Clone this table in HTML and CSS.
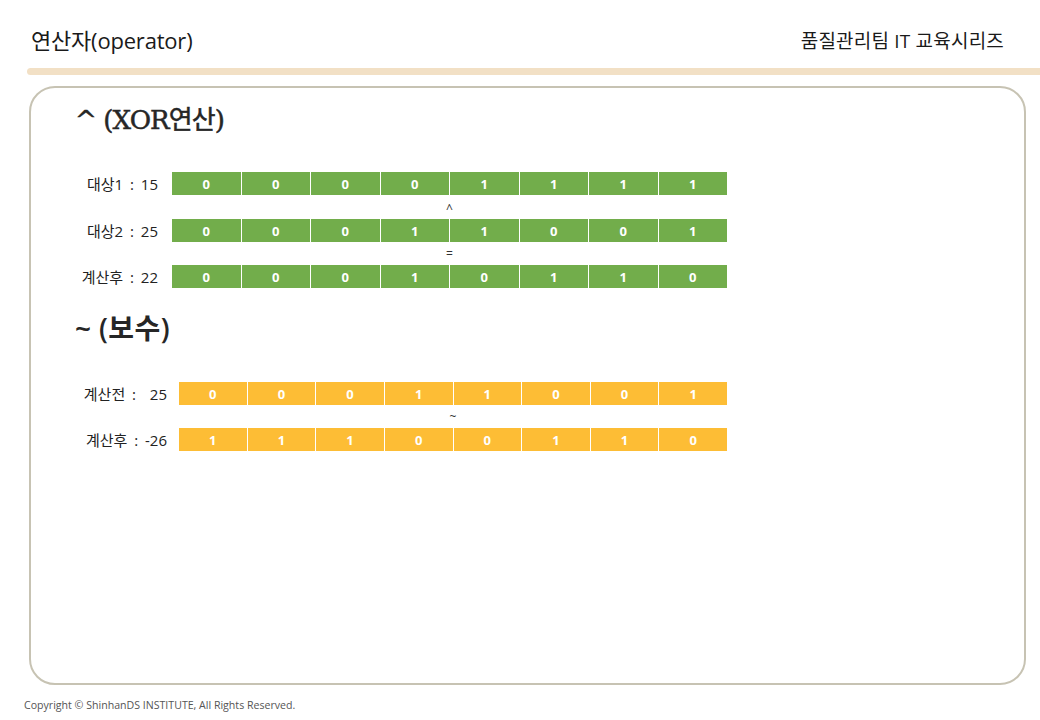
FILE: index.html
```html
<!DOCTYPE html>
<html lang="ko">
<head>
<meta charset="utf-8">
<title>연산자(operator)</title>
<link rel="stylesheet" href="styles.css">
</head>
<body>
<header class="top">
  <div class="title">연산자(operator)</div>
  <div class="series">품질관리팀 IT 교육시리즈</div>
</header>
<div class="rule"></div>
<main class="card">
  <h1 class="h-xor">^ (XOR연산)</h1>
  <section class="grid xor">
    <div class="label">대상1 : 15</div>
    <div class="bits green"><span>0</span><span>0</span><span>0</span><span>0</span><span>1</span><span>1</span><span>1</span><span>1</span></div>
    <div class="op op-a">^</div>
    <div class="label">대상2 : 25</div>
    <div class="bits green"><span>0</span><span>0</span><span>0</span><span>1</span><span>1</span><span>0</span><span>0</span><span>1</span></div>
    <div class="op op-b">=</div>
    <div class="label">계산후 : 22</div>
    <div class="bits green"><span>0</span><span>0</span><span>0</span><span>1</span><span>0</span><span>1</span><span>1</span><span>0</span></div>
  </section>
  <h2 class="h-not">~ (보수)</h2>
  <section class="grid not">
    <div class="label">계산전 :  25</div>
    <div class="bits gold"><span>0</span><span>0</span><span>0</span><span>1</span><span>1</span><span>0</span><span>0</span><span>1</span></div>
    <div class="op op-b">~</div>
    <div class="label">계산후 : -26</div>
    <div class="bits gold"><span>1</span><span>1</span><span>1</span><span>0</span><span>0</span><span>1</span><span>1</span><span>0</span></div>
  </section>
</main>
<footer class="foot">Copyright © ShinhanDS INSTITUTE, All Rights Reserved.</footer>
</body>
</html>
```

FILE: styles.css
```css
* { box-sizing: border-box; }
html, body { margin: 0; padding: 0; background: #ffffff; }
body {
  width: 1040px;
  height: 720px;
  overflow: hidden;
  font-family: "Open Sans", "Noto Sans CJK KR", sans-serif;
  color: #222;
}
.top {
  display: flex;
  justify-content: space-between;
  align-items: center;
  padding: 28px 36px 0 31px;
  height: 52px;
}
.title {
  font-size: 22px;
  line-height: 24px;
  color: #1a1a1a;
  letter-spacing: -0.2px;
}
.series {
  font-size: 19px;
  line-height: 24px;
  color: #1a1a1a;
  letter-spacing: 0.2px;
  padding-top: 2px;
}
.rule {
  margin: 16px 0 0 27px;
  height: 7px;
  background: #f2e0c5;
  border-radius: 4px 0 0 4px;
}
.card {
  margin: 11px 14px 0 29px;
  height: 599px;
  border: 2px solid #c7c3b3;
  border-radius: 26px;
  padding: 16px 0 0 0;
}
.h-xor {
  margin: 0 0 0 44px;
  font-family: "DejaVu Serif", "Noto Sans CJK KR", serif;
  font-size: 26px;
  line-height: 32px;
  font-weight: 400;
  color: #262626;
  letter-spacing: -0.9px;
  -webkit-text-stroke: 0.5px #262626;
}
.h-not {
  margin: 24px 0 0 44px;
  font-family: "Open Sans", "Noto Sans CJK KR", sans-serif;
  font-size: 28px;
  line-height: 32px;
  font-weight: 600;
  color: #262626;
  letter-spacing: 0.4px;
}
.grid {
  display: grid;
  align-items: center;
}
.xor {
  margin-top: 36px;
  grid-template-columns: 127px 555px;
  grid-template-rows: 23px 24px 23px 23px 23px;
  column-gap: 14px;
}
.not {
  margin-top: 38px;
  grid-template-columns: 136px 548px;
  grid-template-rows: 23px 23px 23px;
  column-gap: 12px;
}
.label {
  text-align: right;
  font-size: 15px;
  color: #222;
  white-space: pre;
  word-spacing: 3px;
}
.op {
  grid-column: 2;
  text-align: center;
  font-size: 12px;
  color: #333;
}
.op-a { padding-top: 2px; }
.bits {
  display: grid;
  grid-template-columns: repeat(8, 1fr);
  column-gap: 1px;
  height: 23px;
}
.bits span {
  display: flex;
  align-items: center;
  justify-content: center;
  color: #ffffff;
  font-weight: 700;
  font-size: 13px;
}
.green span { background: #72ad4b; }
.gold span { background: #fdbd35; }
.foot {
  margin: 13px 0 0 24px;
  font-size: 10.6px;
  line-height: 14px;
  color: #555;
}
```
